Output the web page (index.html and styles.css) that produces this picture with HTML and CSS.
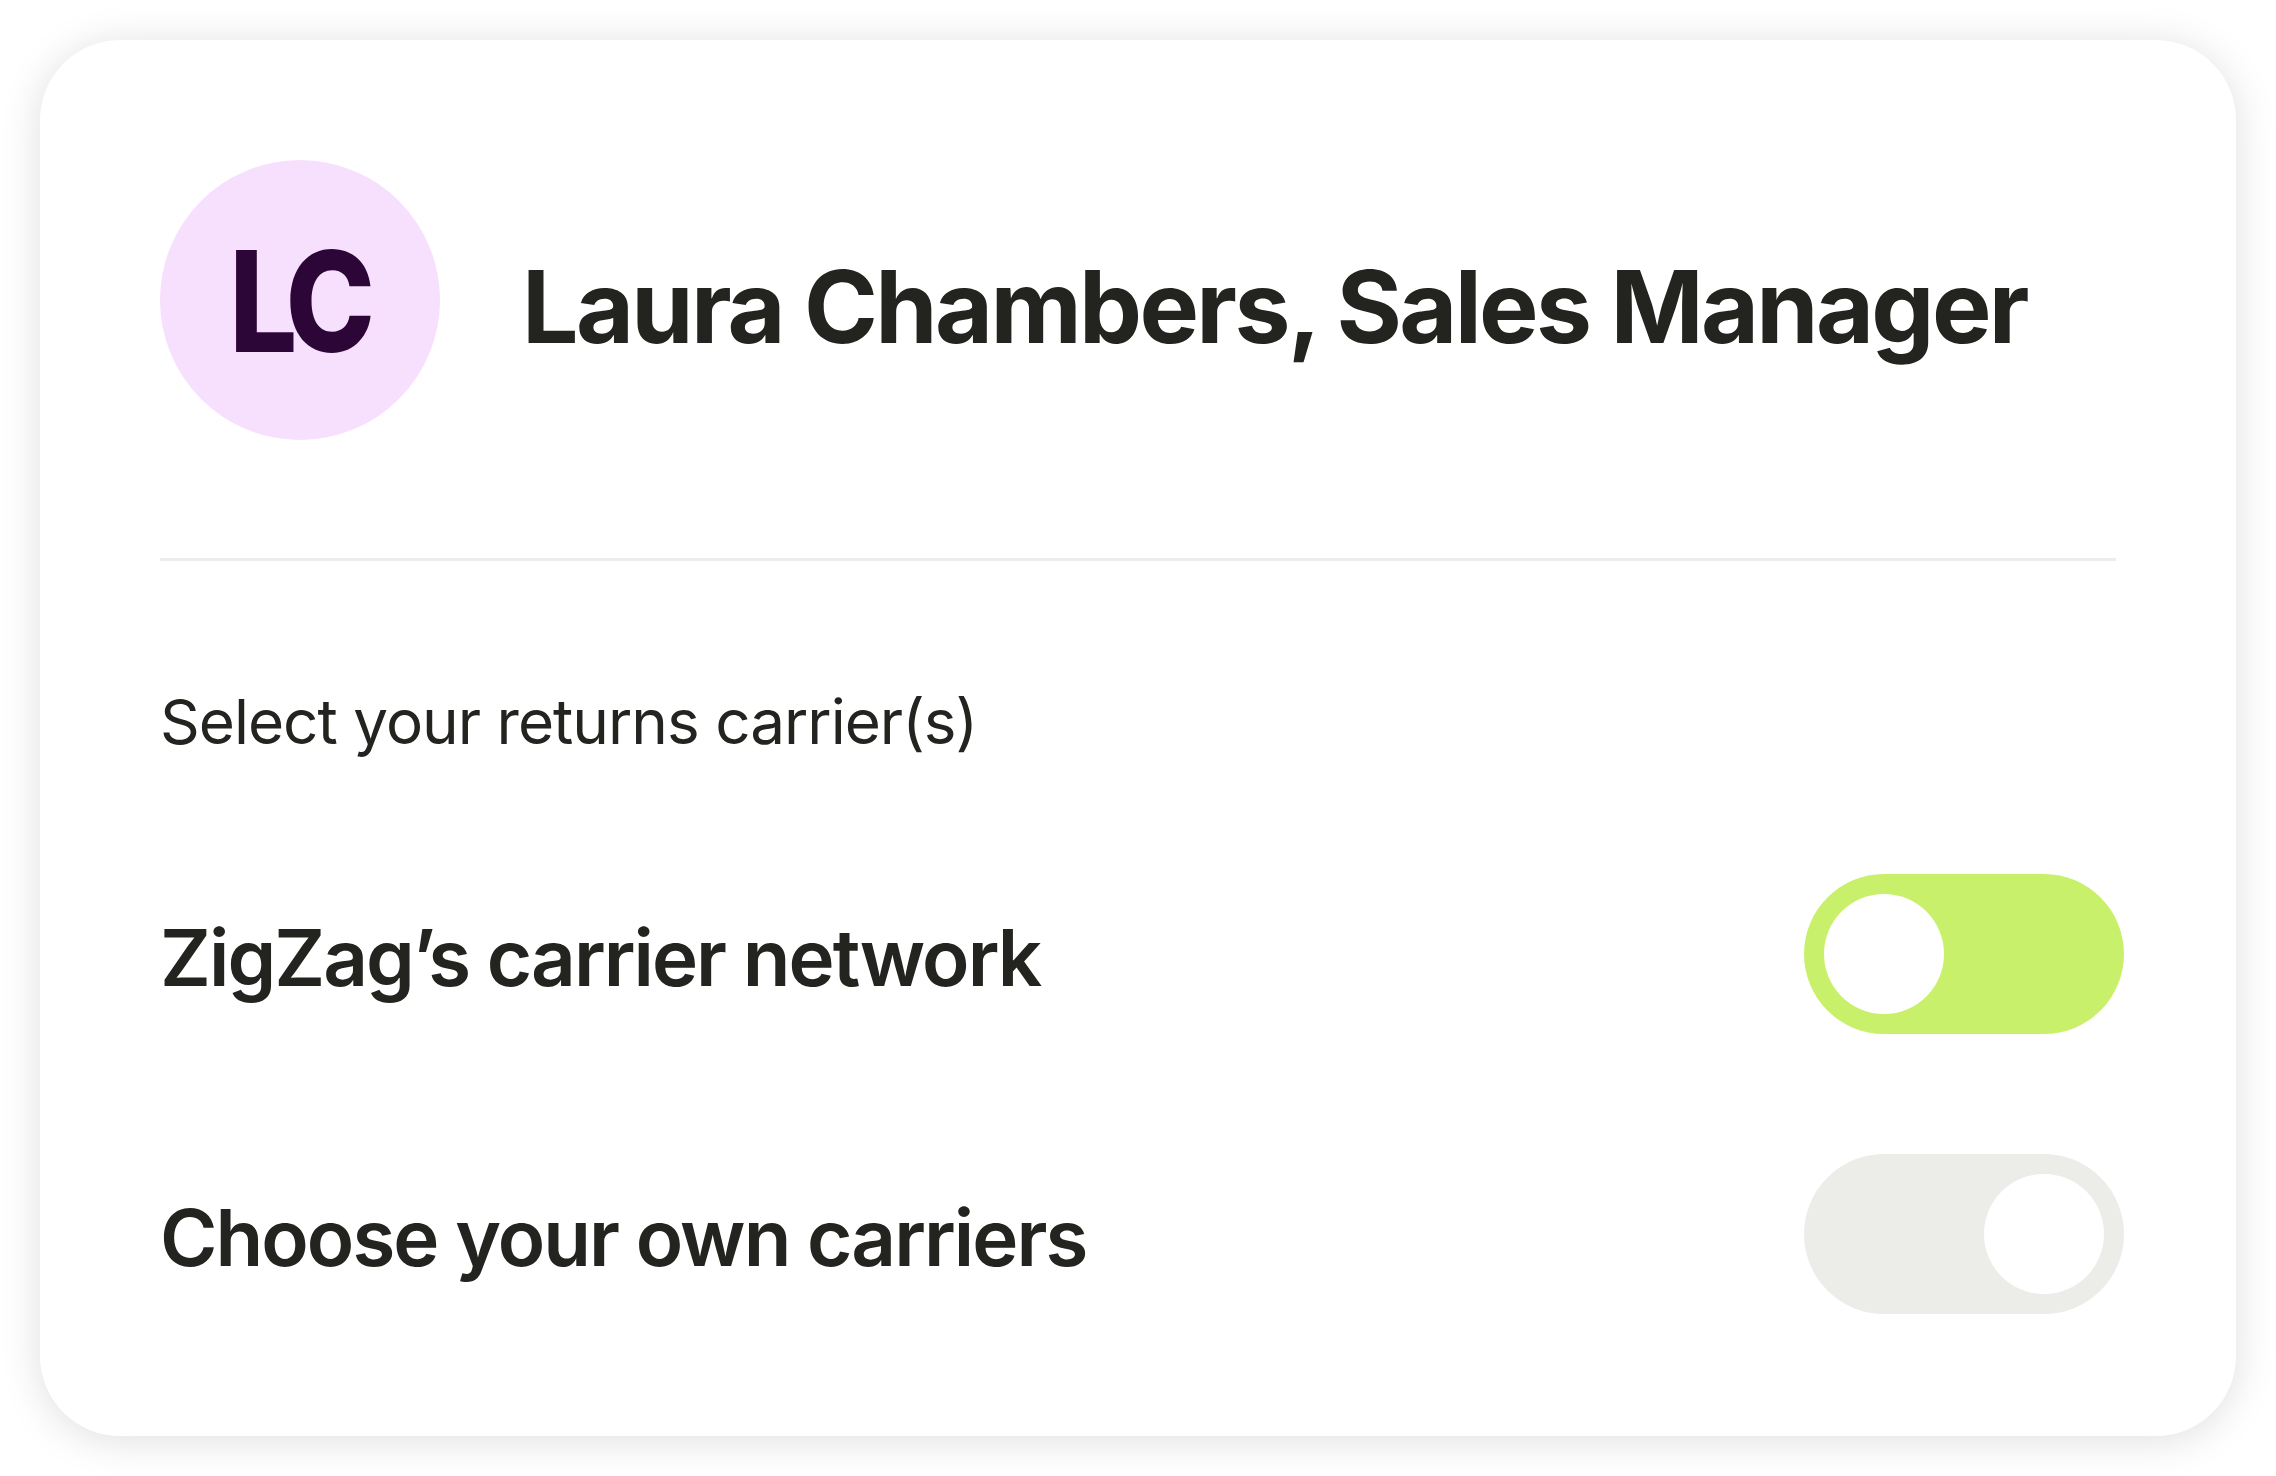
FILE: index.html
```html
<!DOCTYPE html>
<html lang="en">
<head>
<meta charset="utf-8">
<title>Returns carriers</title>
<link rel="stylesheet" href="styles.css">
</head>
<body>
  <div class="card">
    <div class="header">
      <div class="avatar"><span>LC</span></div>
      <h1 class="name">Laura Chambers, Sales Manager</h1>
    </div>
    <div class="divider"></div>
    <p class="subtitle">Select your returns carrier(s)</p>
    <div class="rows">
      <div class="row">
        <span class="label">ZigZag’s carrier network</span>
        <div class="toggle toggle-on"><div class="knob"></div></div>
      </div>
      <div class="row">
        <span class="label">Choose your own carriers</span>
        <div class="toggle toggle-off"><div class="knob"></div></div>
      </div>
    </div>
  </div>
</body>
</html>
```
FILE: styles.css
```css
* { box-sizing: border-box; }
html, body {
  margin: 0;
  background: #ffffff;
}
body {
  padding: 40px;
  font-family: Inter, "Liberation Sans", sans-serif;
  color: #23241f;
}
.card {
  width: 2196px;
  height: 1396px;
  background: #ffffff;
  border-radius: 80px;
  box-shadow: 0 4px 40px rgba(0, 0, 0, 0.13);
  padding: 120px 120px 120px 120px;
  display: flex;
  flex-direction: column;
}
.header {
  display: flex;
  align-items: center;
  gap: 82px;
}
.avatar {
  width: 280px;
  height: 280px;
  border-radius: 50%;
  background: #f7e0fd;
  display: flex;
  align-items: center;
  justify-content: center;
  flex: none;
}
.avatar span {
  display: inline-block;
  font-size: 140px;
  font-weight: 800;
  letter-spacing: -0.07em;
  color: #2d0638;
  line-height: 1;
  margin-top: 2px;
  margin-right: 4px;
  transform: scaleX(0.86);
}
.name {
  margin: 0;
  font-size: 100px;
  font-weight: 700;
  line-height: 1;
  letter-spacing: -0.0265em;
  margin-top: 14px;
}
.divider {
  height: 3px;
  background: #ecedea;
  margin-top: 118px;
}
.subtitle {
  margin: 130px 0 0 0;
  font-size: 62px;
  font-weight: 400;
  line-height: 1;
  letter-spacing: -0.016em;
}
.rows {
  margin-top: 121px;
  display: flex;
  flex-direction: column;
  gap: 120px;
}
.row {
  display: flex;
  align-items: center;
  justify-content: space-between;
}
.label {
  font-size: 78px;
  font-weight: 600;
  line-height: 1;
  letter-spacing: -0.025em;
  margin-top: 8px;
}
.toggle {
  width: 320px;
  height: 160px;
  border-radius: 80px;
  padding: 20px;
  display: flex;
  margin-right: -8px;
}
.toggle-on { background: #c9f06b; justify-content: flex-start; }
.toggle-off { background: #ecede9; justify-content: flex-end; }
.knob {
  width: 120px;
  height: 120px;
  border-radius: 50%;
  background: #ffffff;
}
```
